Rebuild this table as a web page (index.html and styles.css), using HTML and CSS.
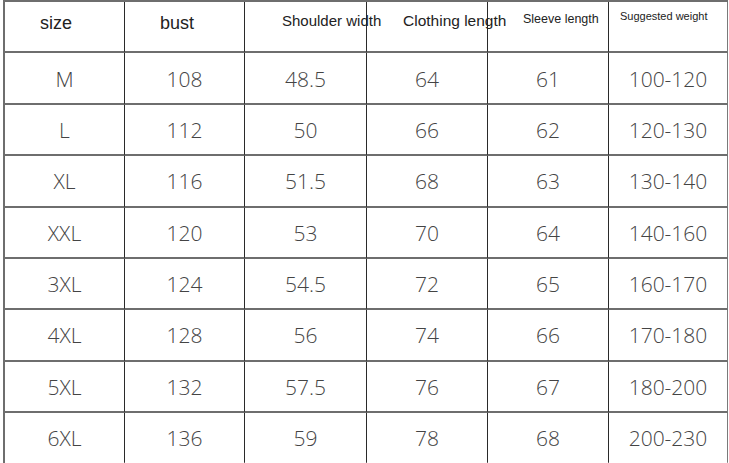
FILE: index.html
```html
<!DOCTYPE html>
<html>
<head>
<meta charset="utf-8">
<link rel="stylesheet" href="styles.css">
</head>
<body>
<div class="chart">
  <div class="cell head h-size">size</div>
  <div class="cell head h-bust">bust</div>
  <div class="cell head h-shoulder">Shoulder width</div>
  <div class="cell head h-cloth">Clothing length</div>
  <div class="cell head h-sleeve">Sleeve length</div>
  <div class="cell head h-weight last">Suggested weight</div>

  <div class="cell">M</div><div class="cell">108</div><div class="cell">48.5</div><div class="cell">64</div><div class="cell">61</div><div class="cell last">100-120</div>
  <div class="cell">L</div><div class="cell">112</div><div class="cell">50</div><div class="cell">66</div><div class="cell">62</div><div class="cell last">120-130</div>
  <div class="cell">XL</div><div class="cell">116</div><div class="cell">51.5</div><div class="cell">68</div><div class="cell">63</div><div class="cell last">130-140</div>
  <div class="cell">XXL</div><div class="cell">120</div><div class="cell">53</div><div class="cell">70</div><div class="cell">64</div><div class="cell last">140-160</div>
  <div class="cell">3XL</div><div class="cell">124</div><div class="cell">54.5</div><div class="cell">72</div><div class="cell">65</div><div class="cell last">160-170</div>
  <div class="cell">4XL</div><div class="cell">128</div><div class="cell">56</div><div class="cell">74</div><div class="cell">66</div><div class="cell last">170-180</div>
  <div class="cell">5XL</div><div class="cell">132</div><div class="cell">57.5</div><div class="cell">76</div><div class="cell">67</div><div class="cell last">180-200</div>
  <div class="cell bottom">6XL</div><div class="cell bottom">136</div><div class="cell bottom">59</div><div class="cell bottom">78</div><div class="cell bottom">68</div><div class="cell last bottom">200-230</div>
</div>
</body>
</html>
```

FILE: styles.css
```css
html, body {
  margin: 0;
  padding: 0;
  background: #ffffff;
  overflow: hidden;
}

.chart {
  margin-left: 3px;
  width: 725px;
  display: grid;
  grid-template-columns: 120px 120px 122px 121px 121px 119px;
  grid-auto-rows: 51.375px;
  border-top: 2px solid #6e6e6e;
  border-left: 2px solid #6e6e6e;
  box-sizing: border-box;
}

.cell {
  box-sizing: border-box;
  border-right: 1.5px solid #2a2a2a;
  border-bottom: 2px solid #6e6e6e;
  display: flex;
  align-items: center;
  justify-content: center;
  font-family: "Open Sans", "Liberation Sans", sans-serif;
  font-weight: 300;
  font-size: 21px;
  color: #444444;
  padding-top: 1px;
}

.cell.last {
  border-right: 1.5px solid #7a7a7a;
}

.cell.bottom {
  border-bottom-color: transparent;
}

.head {
  display: block;
  font-family: "Liberation Sans", Arial, sans-serif;
  font-weight: 400;
  color: #222222;
  white-space: nowrap;
  text-align: left;
  overflow: visible;
}

.h-size,
.h-bust {
  font-size: 18px;
  line-height: 20px;
  padding: 11px 0 0 35px;
}

.h-shoulder {
  font-size: 15px;
  line-height: 18px;
  padding: 10px 0 0 37px;
}

.h-cloth {
  font-size: 15.5px;
  line-height: 18px;
  padding: 10px 0 0 36px;
}

.h-sleeve {
  font-size: 12.5px;
  line-height: 15px;
  padding: 10px 0 0 35px;
}

.h-weight {
  font-size: 11px;
  line-height: 13px;
  padding: 8px 0 0 11px;
}
```
